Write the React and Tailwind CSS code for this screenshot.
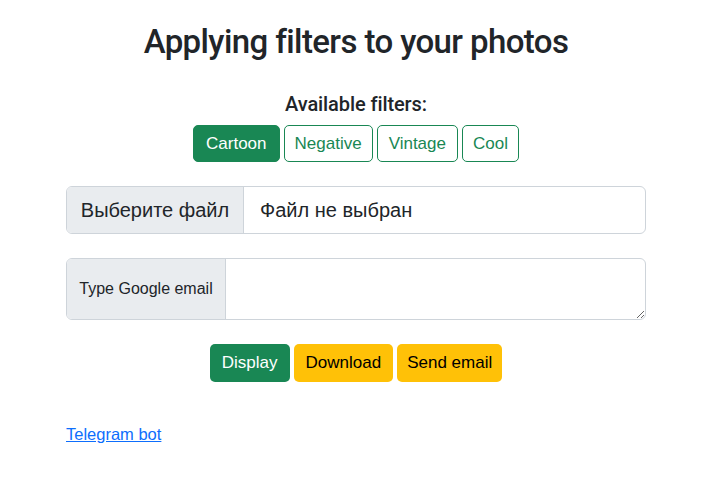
import React from "react";

const font = { fontFamily: '"Liberation Sans", Arial, sans-serif' };
const heading = { fontFamily: 'Roboto, "Liberation Sans", Arial, sans-serif' };

function FilterBtn({ label, active, px }) {
  return (
    <button
      type="button"
      className={[
        "h-[37px] rounded-[5px] border border-[#198754] text-[17px]",
        px,
        active ? "bg-[#198754] text-white" : "bg-white text-[#198754]",
      ].join(" ")}
    >
      {label}
    </button>
  );
}

export default function App() {
  return (
    <div className="min-h-screen bg-white text-[#212529]" style={font}>
      <div className="mx-auto w-[580px] pt-[22px] -translate-x-[5px]">
        <h1
          className="text-center text-[33px] font-medium leading-[40px] tracking-[-0.6px]"
          style={heading}
        >
          Applying filters to your photos
        </h1>

        <h2
          className="mt-[30px] text-center text-[20px] font-medium leading-[24px] tracking-[-0.1px]"
          style={heading}
        >
          Available filters:
        </h2>
        <div className="mt-[9px] flex justify-center gap-[4px]">
          <FilterBtn label="Cartoon" active px="px-[12px]" />
          <FilterBtn label="Negative" px="px-[10px]" />
          <FilterBtn label="Vintage" px="px-[11px]" />
          <FilterBtn label="Cool" px="px-[10px]" />
        </div>

        {/* file input */}
        <div className="mt-[24px] flex h-[48px] overflow-hidden rounded-[6px] border border-[#ced4da]">
          <div className="flex w-[177px] items-center justify-center border-r border-[#ced4da] bg-[#e9ecef] text-[20px]">
            Выберите файл
          </div>
          <div className="flex flex-1 items-center pl-[16px] text-[20px]">Файл не выбран</div>
        </div>

        {/* email */}
        <div className="mt-[24px] flex h-[62px] overflow-hidden rounded-[6px] border border-[#ced4da]">
          <div className="flex w-[159px] items-center justify-center border-r border-[#ced4da] bg-[#e9ecef] text-[16px]">
            Type Google email
          </div>
          <textarea className="flex-1 resize-y px-3 py-2 outline-none" />
        </div>

        <div className="mt-[24px] flex justify-center gap-[4px]">
          <button
            type="button"
            className="h-[38px] rounded-[5px] bg-[#198754] px-[12px] text-[17px] text-white"
          >
            Display
          </button>
          <button
            type="button"
            className="h-[38px] rounded-[5px] bg-[#ffc107] px-[12px] text-[17px] text-black"
          >
            Download
          </button>
          <button
            type="button"
            className="h-[38px] rounded-[5px] bg-[#ffc107] px-[10px] text-[17px] text-black"
          >
            Send email
          </button>
        </div>

        <div className="mt-[40px]">
          <a href="#" className="text-[16.5px] text-[#0d6efd] underline">
            Telegram bot
          </a>
        </div>
      </div>
    </div>
  );
}
